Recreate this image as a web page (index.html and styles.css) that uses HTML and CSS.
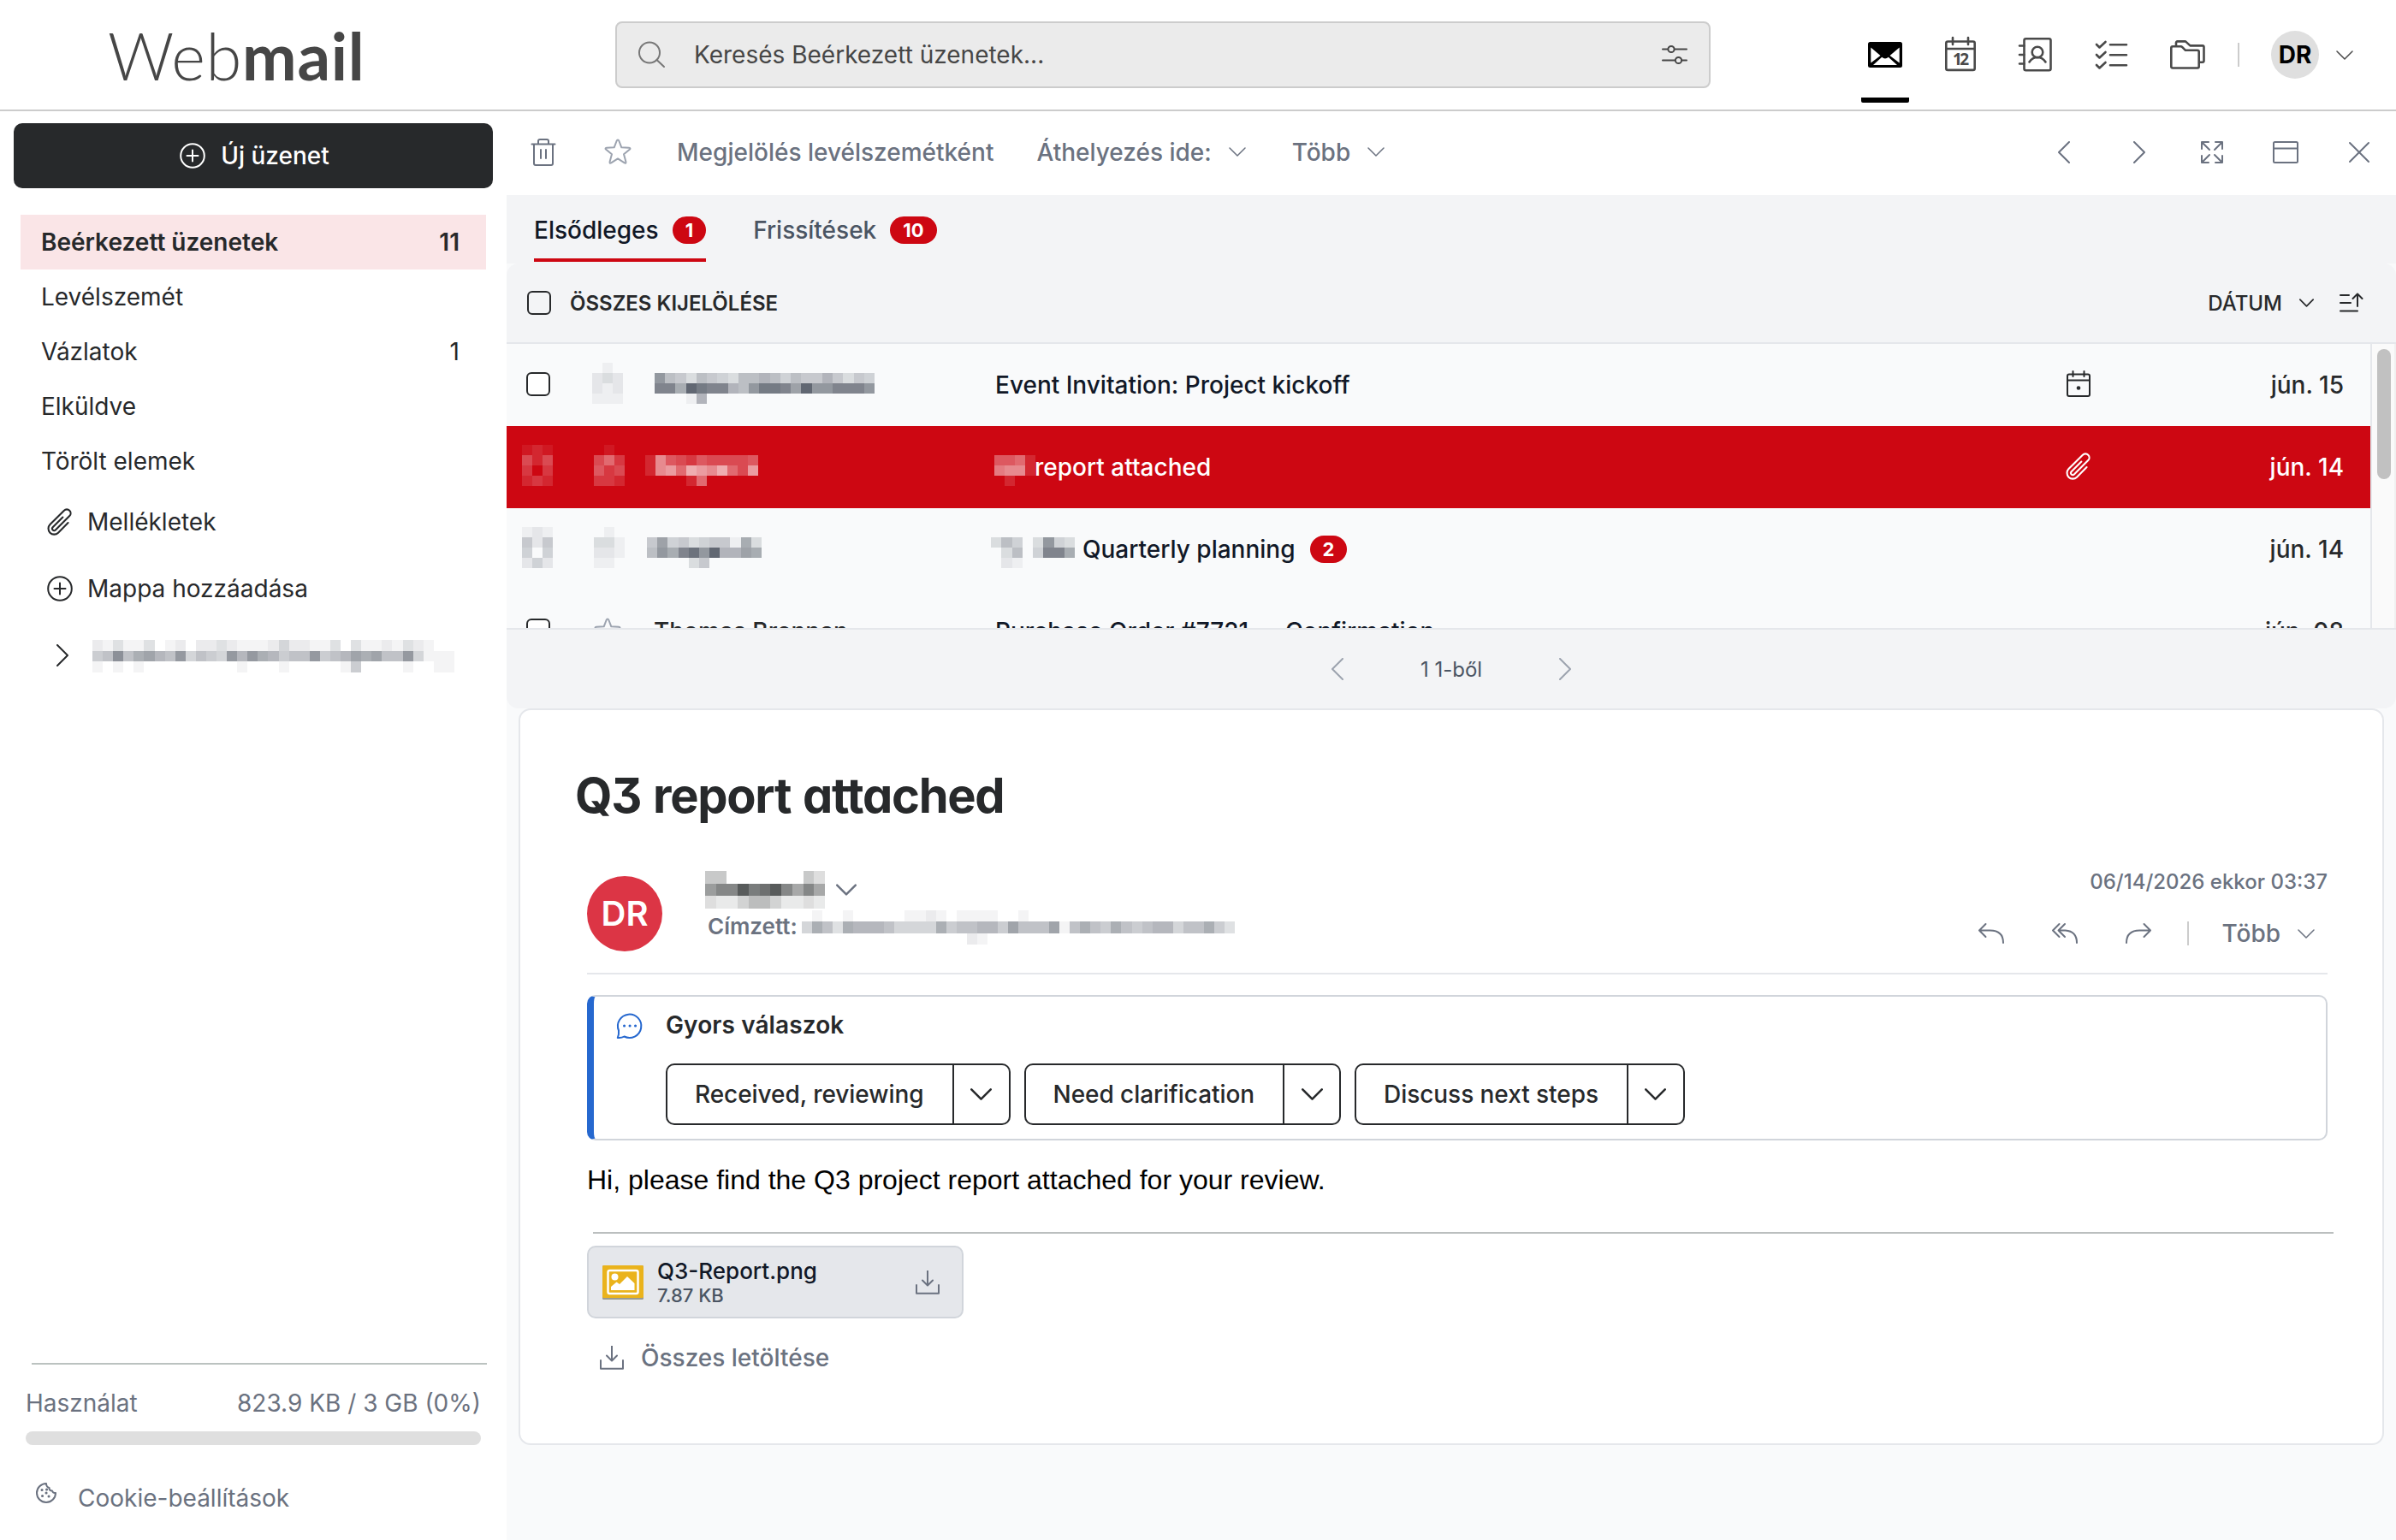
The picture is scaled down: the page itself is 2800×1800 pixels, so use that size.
FILE: index.html
```html
<!DOCTYPE html>
<html lang="hu">
<head>
    <meta charset="utf-8">
    <title>Webmail</title>
    <link rel="stylesheet" href="styles.css">
</head>
<body>
    <svg class="sprite">
        <symbol id="i-down" viewBox="0 0 20 11"><path d="M1 1l9 9 9-9"/></symbol>
        <symbol id="i-left" viewBox="0 0 14 26"><path d="M13 1L1 13l12 12"/></symbol>
        <symbol id="i-right" viewBox="0 0 14 26"><path d="M1 1l12 12L1 25"/></symbol>
        <symbol id="i-plus" viewBox="0 0 30 30"><circle cx="15" cy="15" r="13.8"/><path d="M15 8.500v13M8.500 15h13"/></symbol>
        <symbol id="i-clip" viewBox="0 0 24 24"><path d="m18.375 12.739-7.693 7.693a4.5 4.5 0 0 1-6.364-6.364l10.940-10.940A3 3 0 1 1 19.500 7.372L8.552 18.320a1.500 1.500 0 0 1-2.112-2.130l7.810-7.810"/></symbol>
        <symbol id="i-star" viewBox="0 0 32 32"><path d="M16 1.500q.9 0 1.300 1l3 7.800 8.800.5q2.400.3.6 2l-6.700 5.500 2.400 8.800q.4 2.400-1.600 1.300L16 23.400l-7.800 5q-2 1.100-1.600-1.300l2.400-8.800-6.700-5.500q-1.800-1.700.6-2l8.800-.5 3-7.800q.4-1 1.300-1z"/></symbol>
        <symbol id="i-download" viewBox="0 0 28 28"><path d="M14 0v17M8 11.500l6 6 6-6M1 17v9.800h26V17"/></symbol>
    </svg>

    <div id="header">
        <div class="logo">Web<b>mail</b></div>
        <div class="search">
            <svg class="icon" width="32" height="32" viewBox="0 0 32 32"><circle cx="13" cy="13.500" r="12"/><path d="M21.500 22l8.500 8"/></svg>
            <span class="search-text">Keresés Beérkezett üzenetek...</span>
            <svg class="icon filter" width="28" height="24" viewBox="0 0 28 24"><path d="M0 5.500h6M14 5.500h14M0 18.500h14M22 18.500h6"/><circle cx="10" cy="5.500" r="3.600"/><circle cx="18.500" cy="18.500" r="3.600"/></svg>
        </div>
        <div class="apps">
            <div class="app app-active">
                <svg width="40" height="30" viewBox="0 0 40 30"><rect width="40" height="30" rx="2.500"/><path class="hole" d="M3.300 6.500v18L14.500 16zM36.700 6.500v18L25.500 16zM6 27l10.200-9.200q1.800 1.700 3.800 1.700t3.800-1.700L34 27z"/></svg>
            </div>
            <svg class="app icon" width="36" height="40" viewBox="0 0 36 40"><rect x="1.300" y="4.500" width="33.400" height="33.400" rx="2"/><path d="M1.300 13h33.400M9 0v8M27 0v8"/><text x="9" y="32" textLength="19">12</text></svg>
            <svg class="app icon" width="38" height="40" viewBox="0 0 38 40"><rect x="5.500" y="1.300" width="31" height="37" rx="2"/><path d="M0 9.500h5.500M0 20h5.500M0 30.500h5.500M11.500 28.500q3.500-5.500 9.500-5.500t9.500 5.500"/><circle cx="21" cy="17" r="6.300"/></svg>
            <svg class="app icon" width="36" height="33" viewBox="0 0 36 33"><path d="M1 4l3.500 3.500L11.500 1M1 16l3.500 3.500 7-6.500M1 28l3.500 3.500 7-6.500M17 4.300h19M17 16.300h19M17 28.300h19"/></svg>
            <svg class="app icon" width="41" height="34" viewBox="0 0 41 34"><path d="M1.300 9q0-1.700 1.700-1.700h9.500q1 0 1.800.8l3.700 3.700h14q1.700 0 1.700 1.700v17.300q0 1.700-1.700 1.700H3q-1.700 0-1.700-1.700zM7 7V3q0-1.600 1.600-1.600H18l5.500 5h14.300q1.700 0 1.700 1.700v16q0 1.700-1.700 1.700h-4"/></svg>
            <span class="separator"></span>
            <span class="user">DR</span>
            <svg class="icon thin" width="20" height="11"><use href="#i-down"/></svg>
        </div>
    </div>

    <div id="content">
        <div id="sidebar">
            <div class="new-message"><svg class="icon" width="30" height="30"><use href="#i-plus"/></svg><span>Új üzenet</span></div>
            <div class="folder folder-active"><span>Beérkezett üzenetek</span><span>11</span></div>
            <div class="folder"><span>Levélszemét</span></div>
            <div class="folder"><span>Vázlatok</span><span>1</span></div>
            <div class="folder"><span>Elküldve</span></div>
            <div class="folder"><span>Törölt elemek</span></div>
            <div class="folder-tool"><svg class="icon clip" width="36" height="36"><use href="#i-clip"/></svg><span>Mellékletek</span></div>
            <div class="folder-tool"><svg class="icon" width="30" height="30"><use href="#i-plus"/></svg><span>Mappa hozzáadása</span></div>
            <div class="folder-tool account"><svg class="icon" width="14" height="26"><use href="#i-right"/></svg><span class="mosaic account-name" data-rows="21311301202232111242211303112132100 56b68976a4654a7a87566a56798966a4111 10101000000000100010000015000010011"></span></div>
            <div class="usage">
                <div class="usage-line"><span>Használat</span><span>823.9 KB / 3 GB (0%)</span></div>
                <div class="usage-bar"></div>
            </div>
            <div class="cookies">
                <svg class="icon" width="24" height="24" viewBox="0 0 24 24"><path d="M12 1a11 11 0 1 0 11 11q-3 .5-4-2.500-3.500 0-3.500-3.500Q12 5 12 1z"/><path class="dots" d="M7 8.500h.1M12 12h.1M7.500 15.500h.1M15 16h.1M12.500 8h.1"/></svg>
                <span>Cookie-beállítások</span>
            </div>
        </div>

        <div id="main">
            <div class="toolbar">
                <svg class="icon trash" width="28" height="32" viewBox="0 0 28 32"><path d="M.5 6.500h27M3 6.500V29q0 2 2 2h18q2 0 2-2V6.500M8 6V3q0-2 2-2h8q2 0 2 2v3M11 13v10M17 13v10"/></svg>
                <svg class="icon star" width="32" height="32"><use href="#i-star"/></svg>
                <span class="tool-spam">Megjelölés levélszemétként</span>
                <span class="tool-move">Áthelyezés ide:</span>
                <svg class="icon thin" width="20" height="11"><use href="#i-down"/></svg>
                <span class="tool-more">Több</span>
                <svg class="icon thin" width="20" height="11"><use href="#i-down"/></svg>
                <div class="toolbar-right">
                    <svg class="icon" width="14" height="26"><use href="#i-left"/></svg>
                    <svg class="icon" width="14" height="26"><use href="#i-right"/></svg>
                    <svg class="icon" width="26" height="26" viewBox="0 0 26 26"><path d="M9 1H1v8M1 1l9 9M17 1h8v8M25 1l-9 9M9 25H1v-8M1 25l9-9M17 25h8v-8M25 25l-9-9"/></svg>
                    <svg class="icon" width="30" height="26" viewBox="0 0 30 26"><rect x="1" y="1" width="28" height="24" rx="1.500"/><path d="M1 8.500h28"/></svg>
                    <svg class="icon" width="22" height="22" viewBox="0 0 22 22"><path d="M0 0l22 22M22 0L0 22"/></svg>
                </div>
            </div>

            <div class="tabs">
                <div class="tab tab-active"><span>Elsődleges</span><span class="badge">1</span></div>
                <div class="tab"><span>Frissítések</span><span class="badge">10</span></div>
            </div>

            <div class="list-head">
                <span class="checkbox"></span>
                <span class="select-all">ÖSSZES KIJELÖLÉSE</span>
                <span class="sort">DÁTUM</span>
                <svg class="icon" width="17" height="10"><use href="#i-down"/></svg>
                <svg class="icon" width="28" height="24" viewBox="0 0 28 24"><path d="M0 3h10M0 12h12M0 21.500h20M20 16V1.500M14.500 7L20 1.500 25.500 7"/></svg>
            </div>

            <div class="list">
                <div class="rows">
                    <div class="row">
                        <div class="c-check"><span class="checkbox"></span></div>
                        <div class="c-star"><span class="mosaic m-tall" data-rows="010 232 212 111"></span></div>
                        <div class="c-name"><span class="mosaic m-name m-long" data-rows="a65365436676465575354 cc8fdcc76addc9faaccca 000170000000000000000"></span></div>
                        <div class="c-subject"><span>Event Invitation: Project kickoff</span></div>
                        <div class="c-icon"><svg class="icon" width="28" height="30" viewBox="0 0 28 30"><rect x="1" y="3.500" width="26" height="25.500" rx="2"/><path d="M1 10.500h26M7.500 0v6M20.500 0v6"/><circle class="dot" cx="14" cy="19.500" r="2.300"/></svg></div>
                        <div class="c-date">jún. 15</div>
                    </div>
                    <div class="row row-active">
                        <div class="c-check"><span class="mosaic m-tall" data-rows="121 424 303 232"></span></div>
                        <div class="c-star"><span class="mosaic m-tall" data-rows="010 463 534 332"></span></div>
                        <div class="c-name"><span class="mosaic m-name" data-rows="28543544445 2896a98a649 00002600000"></span></div>
                        <div class="c-subject"><span class="mosaic m-sub" data-rows="5562 7882 0200"></span><span>report attached</span></div>
                        <div class="c-icon"><svg class="icon clip" width="36" height="36"><use href="#i-clip"/></svg></div>
                        <div class="c-date">jún. 14</div>
                    </div>
                    <div class="row">
                        <div class="c-check"><span class="mosaic m-tall" data-rows="121 525 404 242"></span></div>
                        <div class="c-star"><span class="mosaic m-tall" data-rows="010 331 221 110"></span></div>
                        <div class="c-name"><span class="mosaic m-name" data-rows="59453455183 6a8ceaf7798 00003500000"></span></div>
                        <div class="c-subject"><span class="mosaic m-sub m-two" data-rows="36403a43 03604cc8 02100000"></span><span>Quarterly planning</span><span class="badge">2</span></div>
                        <div class="c-icon"></div>
                        <div class="c-date">jún. 14</div>
                    </div>
                    <div class="row">
                        <div class="c-check"><span class="checkbox"></span></div>
                        <div class="c-star"><svg class="icon star" width="32" height="32"><use href="#i-star"/></svg></div>
                        <div class="c-name"><span class="name-text">Thomas Brennan</span></div>
                        <div class="c-subject"><span>Purchase Order #7721 — Confirmation</span></div>
                        <div class="c-icon"></div>
                        <div class="c-date">jún. 08</div>
                    </div>
                </div>
                <div class="scroll"><div class="thumb"></div></div>
            </div>

            <div class="pager">
                <svg class="icon" width="14" height="26"><use href="#i-left"/></svg>
                <span>1 1-ből</span>
                <svg class="icon" width="14" height="26"><use href="#i-right"/></svg>
            </div>

            <div class="message">
                <h1>Q3 report attached</h1>
                <div class="message-head">
                    <div class="avatar">DR</div>
                    <div class="people">
                        <div class="from"><span class="mosaic from-name" data-rows="55000000053 9bbfcdfb8b8 32246642232"></span><svg class="icon" width="24" height="14"><use href="#i-down"/></svg></div>
                        <div class="to"><span class="to-label">Címzett:</span><span class="mosaic to-name" data-rows="010010000011210111100100000000000000000000 486387776444485667759666916865865677466853 000000000000000021000000000000000000000000"></span></div>
                    </div>
                    <div class="message-side">
                        <div class="message-date">06/14/2026 ekkor 03:37</div>
                        <div class="message-actions">
                            <svg class="icon" width="30" height="24" viewBox="0 0 30 24"><path d="M8.500 1L1 8.500 8.500 16M1 8.500h12.500Q29 8.500 29 23"/></svg>
                            <svg class="icon" width="30" height="24" viewBox="0 0 30 24"><path d="M8.500 1L1 8.500 8.500 16M15 1L7.500 8.500 15 16M7.500 8.500h8Q29 9.500 29 23"/></svg>
                            <svg class="icon" width="30" height="24" viewBox="0 0 30 24"><path d="M21.500 1L29 8.500 21.500 16M29 8.500H16.500Q1 8.500 1 23"/></svg>
                            <span class="separator"></span>
                            <span>Több</span>
                            <svg class="icon thin" width="20" height="11"><use href="#i-down"/></svg>
                        </div>
                    </div>
                </div>

                <div class="quick">
                    <svg class="icon chat" width="32" height="32" viewBox="0 0 32 32"><path d="M3 21.500A13.700 13.700 0 1 1 9.500 28.500Q6 30.500 1.800 30 3.500 26 3 21.500z"/><path class="dots" d="M9.500 16h.1M16 16h.1M22.500 16h.1"/></svg>
                    <div>
                        <div class="quick-title">Gyors válaszok</div>
                        <div class="quick-buttons">
                            <div class="split"><span class="split-text">Received, reviewing</span><span class="split-arrow"><svg class="icon" width="25" height="14"><use href="#i-down"/></svg></span></div>
                            <div class="split"><span class="split-text">Need clarification</span><span class="split-arrow"><svg class="icon" width="25" height="14"><use href="#i-down"/></svg></span></div>
                            <div class="split"><span class="split-text">Discuss next steps</span><span class="split-arrow"><svg class="icon" width="25" height="14"><use href="#i-down"/></svg></span></div>
                        </div>
                    </div>
                </div>

                <div class="body-text">Hi, please find the Q3 project report attached for your review.</div>

                <div class="attachments">
                    <div class="attachment">
                        <svg width="48" height="40" viewBox="0 0 48 40"><rect width="48" height="40" rx="1.500" fill="#9a9a8f"/><rect width="48" height="38" rx="1.500" fill="#eab31c"/><rect x="6.500" y="6" width="35" height="27" rx="2" fill="none" stroke="#fff" stroke-width="2.500"/><circle cx="14.500" cy="13.500" r="4" fill="#fff"/><path fill="#fff" d="M10 29v-4l6.500-5.500 3.500 2.500 9-9 8.500 8v8z"/></svg>
                        <div class="file"><div class="file-name">Q3-Report.png</div><div class="file-size">7.87 KB</div></div>
                        <svg class="icon" width="28" height="28"><use href="#i-download"/></svg>
                    </div>
                    <div class="download-all"><svg class="icon" width="28" height="28"><use href="#i-download"/></svg><span>Összes letöltése</span></div>
                </div>
            </div>
        </div>
    </div>

    <script src="mosaic.js"></script>
</body>
</html>
```
FILE: styles.css
```css
html,body{
    margin: 0;
    background-color: white;
}
body{
    width: 2800px;
    height: 1800px;
    overflow: hidden;
    display: flex;
    flex-direction: column;
    font: 28px/36px Inter, "Liberation Sans", sans-serif;
    color: #27292b;
}
.sprite{
    position: absolute;
    width: 0;
    height: 0;
}
.icon{
    fill: none;
    stroke: currentColor;
    stroke-width: 2px;
    stroke-linejoin: round;
    stroke-linecap: round;
    flex: none;
    overflow: visible;
}
.icon .dots{
    stroke-width: 3px;
}
.icon .dot{
    fill: currentColor;
    stroke: none;
}
.thin{
    stroke-width: 1.5px;
}
.clip{
    stroke-width: 1.4px;
}
.separator{
    width: 2px;
    height: 28px;
    background-color: #ccc;
}
.checkbox{
    box-sizing: border-box;
    width: 28px;
    height: 28px;
    border: 2px solid #27292b;
    border-radius: 6px;
    background-color: white;
    flex: none;
}
.badge{
    height: 32px;
    padding: 0 15px;
    border-radius: 16px;
    background-color: #cd0712;
    color: white;
    font-size: 22px;
    line-height: 32px;
    font-weight: 700;
    text-align: center;
}
.mosaic{
    display: block;
    flex: none;
    color: #616772;
}
.mosaic svg{
    display: block;
    width: 100%;
    height: 100%;
    shape-rendering: crispEdges;
}

/* header */
#header{
    height: 128px;
    border-bottom: 2px solid #ccc;
    display: flex;
    align-items: center;
}
.logo{
    width: 593px;
    padding: 2px 0 0 126px;
    font: 300 76px/90px Lato, sans-serif;
    letter-spacing: 0.7px;
    color: #464646;
}
.logo b{
    font-weight: 700;
}
.search{
    box-sizing: border-box;
    width: 1280px;
    height: 78px;
    padding: 0 26px 0 25px;
    border: 2px solid #ccc;
    border-radius: 8px;
    background-color: #ebebeb;
    display: flex;
    align-items: center;
    color: #777;
}
.search-text{
    flex: 1;
    padding-left: 33px;
    color: #464646;
}
.filter{
    color: #464646;
}
.apps{
    flex: 1;
    height: 128px;
    display: flex;
    align-items: center;
    padding-left: 184px;
    color: #4a4a4a;
}
.app{
    margin-right: 51px;
    stroke-width: 2.6px;
}
.app text{
    font: 700 19px "Noto Sans", sans-serif;
    fill: currentColor;
    stroke: none;
}
.app-active{
    align-self: flex-start;
    height: 65px;
    width: 40px;
    padding: 15px 8px 0 8px;
    margin: 34px 42px 0 -8px;
    border-bottom: 6px solid black;
    border-radius: 2px;
}
.apps .separator{
    margin-left: -13px;
}
.hole{
    fill: white;
}
.user{
    width: 56px;
    height: 56px;
    margin: 0 20px 0 37px;
    border-radius: 50%;
    background-color: #dfdfdf;
    color: black;
    font-weight: 700;
    line-height: 56px;
    text-align: center;
}

#content{
    flex: 1;
    display: flex;
}

/* sidebar */
#sidebar{
    width: 592px;
    display: flex;
    flex-direction: column;
}
.new-message{
    margin: 14px 16px 31px;
    padding-left: 3px;
    height: 76px;
    border-radius: 10px;
    background-color: #27292b;
    color: white;
    font-weight: 500;
    display: flex;
    align-items: center;
    justify-content: center;
    gap: 18px;
}
.folder{
    height: 64px;
    margin: 0 24px;
    padding: 0 31px 0 24px;
    display: flex;
    align-items: center;
    justify-content: space-between;
}
.folder-active{
    background-color: #fae5e7;
    font-weight: 600;
}
.folder-tool{
    height: 78px;
    padding-left: 55px;
    display: flex;
    align-items: center;
}
.folder-tool .clip{
    margin: 0 -3px;
}
.folder-tool span{
    margin-left: 17px;
}
.account .icon{
    margin: 0 12px 0 11px;
}
.account .account-name{
    width: 423px;
    height: 38px;
    margin-left: 16px;
    margin-top: 2px;
}
.usage{
    margin: auto 30px 0 30px;
    color: #6b7280;
}
.usage:before{
    content: "";
    display: block;
    height: 2px;
    margin: 0 -7px 27px 7px;
    background-color: #bbc2c0;
}
.usage-line{
    display: flex;
    justify-content: space-between;
}
.usage-bar{
    height: 16px;
    margin-top: 15px;
    border-radius: 8px;
    background-color: #dfdfdf;
}
.cookies{
    margin: 44px 0 31px;
    padding-left: 42px;
    display: flex;
    gap: 25px;
    color: #6b7280;
}

/* main column */
#main{
    flex: 1;
    display: flex;
    flex-direction: column;
    background-color: #f9fafb;
}
.toolbar{
    box-sizing: border-box;
    height: 98px;
    padding: 0 32px 2px 30px;
    background-color: white;
    color: #6b7280;
    font-weight: 500;
    display: flex;
    align-items: center;
}
.star{
    color: #9ca3af;
}
.toolbar .trash{
    margin-left: -1px;
}
.toolbar .star{
    margin: 0 53px 0 57px;
}
.toolbar .icon{
    margin-top: -1px;
}
.tool-spam{
    margin-right: 50px;
}
.tool-move, .tool-more{
    margin-right: 20px;
}
.thin + .tool-more{
    margin-left: 54px;
}
.toolbar-right{
    margin-left: auto;
    display: flex;
    align-items: center;
    padding-top: 1px;
}
.toolbar-right .icon{
    margin-left: 74px;
}
.toolbar-right .icon:nth-child(3){
    margin-left: 65px;
}
.toolbar-right .icon:nth-child(4){
    margin-left: 58px;
}
.toolbar-right .icon:nth-child(5){
    margin-left: 60px;
}
.tabs{
    height: 80px;
    padding-left: 32px;
    background-color: #f3f4f6;
    display: flex;
    gap: 55px;
}
.tab{
    box-sizing: border-box;
    height: 78px;
    padding-top: 4px;
    display: flex;
    align-items: center;
    gap: 16px;
    color: #4b5563;
    font-weight: 500;
}
.tab-active{
    color: #111827;
    border-bottom: 4px solid #cd0712;
    padding-top: 8px;
}
.list-head{
    height: 92px;
    padding: 0 37px 0 24px;
    border-radius: 14px 14px 0 0;
    border-bottom: 2px solid #e5e7eb;
    background-color: #f3f4f6;
    display: flex;
    align-items: center;
    font-size: 24px;
    font-weight: 500;
}
.list-head .checkbox{
    background-color: transparent;
}
.select-all{
    flex: 1;
    margin-left: 22px;
    padding-top: 2px;
    font-weight: 600;
}
.sort{
    margin-right: 20px;
    padding-top: 2px;
}
.list-head .icon + .icon{
    margin-left: 31px;
}
.list{
    height: 332px;
    border-bottom: 2px solid #e5e7eb;
    overflow: hidden;
    display: flex;
}
.rows{
    flex: 1;
}
.row{
    height: 96px;
    padding-right: 31px;
    display: grid;
    grid-template-columns: 94px 68px 409px 1fr 124px 200px;
    font-weight: 500;
}
.row > div{
    display: flex;
    align-items: center;
}
.row .c-check{
    padding-left: 23px;
}
.c-check .checkbox{
    margin-bottom: 2px;
}
.c-check .mosaic{
    margin-left: -5px;
}
.row .c-star{
    padding-left: 8px;
}
.row:first-child .c-star{
    padding-left: 6px;
}
.name-text{
    margin-left: 10px;
}
.c-subject{
    color: #111827;
}
.c-icon .icon{
    margin-bottom: 2px;
}
.row .c-date{
    justify-content: flex-end;
}
.row-active{
    background-color: #cd0712;
}
.row-active, .row-active .c-subject, .row-active .mosaic{
    color: white;
}
.row-active .c-icon .icon{
    margin-left: -4px;
}
.m-tall{
    width: 36px;
    height: 48px;
    margin-bottom: 4px;
}
.m-name{
    width: 132px;
    height: 36px;
    margin-top: 8px;
}
.row-active + .row .m-name{
    width: 134px;
    margin-left: 2px;
}
.m-long{
    width: 257px;
    margin-left: 11px;
}
.m-sub{
    width: 48px;
    height: 36px;
    margin: 8px -1px 0 -1px;
}
.m-two{
    width: 98px;
    margin: 8px 9px 0 -5px;
}
.c-subject .badge{
    margin-left: 17px;
}
.scroll{
    box-sizing: border-box;
    width: 30px;
    border-left: 2px solid #e5e7eb;
    border-right: 2px solid #f0f0f0;
    padding: 6px 4px 0 6px;
    background-color: #fafafa;
}
.thumb{
    width: 16px;
    height: 152px;
    border-radius: 8px;
    background-color: #c1c1c1;
}
.pager{
    height: 92px;
    border-radius: 0 0 14px 14px;
    background-color: #f3f4f6;
    display: flex;
    align-items: center;
    justify-content: center;
    gap: 90px;
    color: #9ca3af;
    font-size: 24px;
}
.pager span{
    color: #4b5563;
    padding-top: 1px;
}

/* opened message */
.message{
    box-sizing: border-box;
    height: 861px;
    margin: 0 14px;
    padding: 0 64px 0 78px;
    border: 2px solid #e5e7eb;
    border-radius: 14px;
    background-color: white;
}
.message h1{
    margin: 65px 0 -1px -14px;
    font-size: 56px;
    line-height: 70px;
    font-weight: 650;
    font-feature-settings: "cv09", "cv11";
    letter-spacing: -1.3px;
    word-spacing: 2px;
}
.message-head{
    height: 136px;
    padding-top: 37px;
    border-bottom: 2px solid #e5e7eb;
    display: flex;
}
.avatar{
    width: 88px;
    height: 88px;
    margin-top: 23px;
    border-radius: 50%;
    background-color: #dc3545;
    color: white;
    font-size: 40px;
    font-weight: 600;
    line-height: 88px;
    text-align: center;
}
.people{
    flex: 1;
    padding: 17px 0 0 50px;
    color: #6b7280;
}
.from{
    display: flex;
    align-items: center;
    gap: 13px;
}
.from-name{
    width: 140px;
    height: 44px;
    color: #585b5b;
}
.to{
    margin-left: 3px;
    display: flex;
    font-size: 26px;
    font-weight: 600;
}
.to-label{
    padding-top: 3px;
}
.to-name{
    width: 506px;
    height: 40px;
    margin: 2px 0 0 5px;
}
.message-side{
    text-align: right;
    padding-top: 12px;
    color: #6b7280;
    font-weight: 500;
}
.message-date{
    font-size: 24px;
}
.message-actions{
    margin-top: 24px;
    padding-right: 15px;
    display: flex;
    align-items: center;
    justify-content: flex-end;
}
.message-actions .icon + .icon{
    margin-left: 56px;
}
.message-actions .separator{
    margin: 0 39px 0 42px;
}
.message-actions .thin{
    margin-left: 20px;
}
.quick{
    box-sizing: border-box;
    height: 170px;
    margin-top: 24px;
    padding: 15px 0 0 26px;
    border: 2px solid #d1d5db;
    border-left: 8px solid #2668cf;
    border-radius: 10px;
    display: flex;
    gap: 26px;
}
.chat{
    margin-top: 3px;
    color: #2668cf;
}
.quick-title{
    font-weight: 600;
    letter-spacing: 0.1px;
}
.quick-buttons{
    display: flex;
    gap: 16px;
    margin-top: 27px;
}
.split{
    box-sizing: border-box;
    height: 72px;
    border: 2px solid #27292b;
    border-radius: 10px;
    display: flex;
    font-weight: 500;
    letter-spacing: -0.06px;
}
.split-text{
    padding: 16px 33px 16px 32px;
}
.split-arrow{
    width: 64px;
    border-left: 2px solid #27292b;
    display: flex;
    align-items: center;
    justify-content: center;
}
.body-text{
    margin-top: 28px;
    font: 32px/36px "Liberation Sans", Arial, sans-serif;
    color: black;
}
.attachments:before{
    content: "";
    display: block;
    height: 2px;
    margin: 43px -7px 14px 7px;
    background-color: #bbbfbf;
}
.attachment{
    box-sizing: border-box;
    width: 440px;
    height: 85px;
    padding: 0 26px 0 16px;
    border: 2px solid #d1d5db;
    border-radius: 10px;
    background-color: #e5e7eb;
    display: flex;
    align-items: center;
    color: #6b7280;
}
.file{
    flex: 1;
    margin-left: 16px;
    padding-top: 1px;
    font-weight: 500;
}
.file-name{
    font-size: 26px;
    line-height: 29px;
    color: #111827;
}
.file-size{
    font-size: 22px;
    line-height: 28px;
    color: #4b5563;
}
.download-all{
    margin: 28px 0 0 15px;
    display: flex;
    align-items: center;
    gap: 20px;
    color: #6b7280;
    font-weight: 500;
}
```
FILE: mosaic.js
```javascript
// each digit of data-rows is the opacity (0-f) of one block
document.querySelectorAll('.mosaic').forEach(function(el){
    var rows = el.getAttribute('data-rows').split(' ');
    var out = '';
    rows.forEach(function(row, y){
        for(var x = 0; x < row.length; x++){
            var level = parseInt(row[x], 16);
            if(level){
                out += '<rect x="' + x + '" y="' + y + '" width="1" height="1" fill="currentColor" opacity="' + (level / 15).toFixed(2) + '"/>';
            }
        }
    });
    el.innerHTML = '<svg preserveAspectRatio="none" viewBox="0 0 ' + rows[0].length + ' ' + rows.length + '">' + out + '</svg>';
});
```
